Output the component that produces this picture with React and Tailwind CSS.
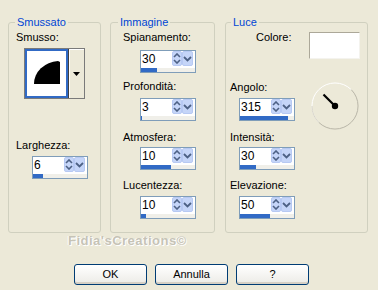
import React from 'react';

// spin box with up/down + dropdown buttons and a fill bar underneath
function Spin({ value, fill, className = '' }) {
  return (
    <div className={`flex h-[23px] w-[56px] flex-col border border-[#7F9DB9] bg-white ${className}`}>
      <div className="flex h-[16px] items-start">
        <span className="flex-1 pl-[1px] text-[12px] leading-[16px] text-black">{value}</span>
        <div className="mr-[2px] flex h-[15px]">
          <div className="flex w-[10px] items-center justify-center rounded-[2px] border border-[#B7C9F3] bg-[#C5D5F8]">
            <svg width="8" height="11" viewBox="0 0 8 11">
              <path d="M1 4 L4 1 L7 4" fill="none" stroke="#4D6185" strokeWidth="1.6" />
              <path d="M1 7 L4 10 L7 7" fill="none" stroke="#4D6185" strokeWidth="1.6" />
            </svg>
          </div>
          <div className="flex w-[11px] items-center justify-center rounded-[2px] border border-[#B7C9F3] bg-[#C5D5F8]">
            <svg width="9" height="6" viewBox="0 0 9 6">
              <path d="M1 1 L4.5 4.5 L8 1" fill="none" stroke="#4D6185" strokeWidth="1.8" />
            </svg>
          </div>
        </div>
      </div>
      <div className="mt-[1px] h-[4px] bg-[#F0EFE9]">
        <div className={`h-full bg-[#316AC5] ${fill}`} />
      </div>
    </div>
  );
}

function Group({ title, legendClass, className, children }) {
  return (
    <fieldset className={`h-[217px] rounded-[3px] border border-[#D0D0BF] ${className}`}>
      <legend className={`px-[2px] leading-[13px] text-[#0046D5] ${legendClass}`}>{title}</legend>
      {children}
    </fieldset>
  );
}

function Dial() {
  return (
    <svg width="48" height="48" viewBox="0 0 48 48">
      <path d="M7.7 40.3 A23 23 0 0 1 40.3 7.7" fill="none" stroke="#FFFFFF" strokeWidth="1" />
      <path d="M40.3 7.7 A23 23 0 0 1 7.7 40.3" fill="none" stroke="#B9B6A8" strokeWidth="1" />
      <path d="M7.7 40.3 A23 23 0 0 1 1 24" fill="none" stroke="#D6D3C6" strokeWidth="1" />
      <line x1="24" y1="24" x2="12.5" y2="12.5" stroke="#000" strokeWidth="2.2" />
      <circle cx="24" cy="24" r="3.2" fill="#000" />
    </svg>
  );
}

function XpButton({ children }) {
  return (
    <button className="h-[21px] w-[73px] rounded-[3px] border border-[#003C74] bg-gradient-to-b from-white to-[#ECEBE6] text-[11px] leading-[19px] text-black shadow-[inset_0_-2px_0_#D6D0C5]">
      {children}
    </button>
  );
}

export default function App() {
  const immagine = [
    { label: 'Spianamento:', value: '30', fill: 'w-[16px]', lm: 'mt-[2px]', sm: 'mt-[6px]' },
    { label: 'Profondità:', value: '3', fill: 'w-[1px]', lm: 'mt-[7px]', sm: 'mt-[5px]' },
    { label: 'Atmosfera:', value: '10', fill: 'w-[30px]', lm: 'mt-[10px]', sm: 'mt-[3px]' },
    { label: 'Lucentezza:', value: '10', fill: 'w-[5px]', lm: 'mt-[9px]', sm: 'mt-[4px]' },
  ];
  const luce = [
    { label: 'Angolo:', value: '315', fill: 'w-[48px]', lm: 'mt-0', sm: 'mt-[4px]' },
    { label: 'Intensità:', value: '30', fill: 'w-[16px]', lm: 'mt-[10px]', sm: 'mt-[3px]' },
    { label: 'Elevazione:', value: '50', fill: 'w-[30px]', lm: 'mt-[9px]', sm: 'mt-[4px]' },
  ];

  return (
    <div className="h-[290px] w-[378px] overflow-hidden bg-[#ECE9D8] pt-[16px] font-['Liberation_Sans',Arial,sans-serif] text-[11px] text-black">
      <div className="flex">
        {/* Smussato */}
        <Group title="Smussato" legendClass="ml-[6px]" className="ml-[8px] w-[93px]">
          <div className="ml-[7px] mt-[2px] leading-[13px]">Smusso:</div>
          <div className="ml-[15px] mt-[4px] flex h-[51px] w-[61px] border border-[#7A7A7A] bg-white">
            <div className="h-full w-[43px] border-2 border-[#316AC5] bg-white">
              <svg width="39" height="47" viewBox="0 0 39 47">
                <path d="M7 33 A26 23 0 0 1 31 10 L33 11 L33 33 Z" fill="#000" />
              </svg>
            </div>
            <div className="flex flex-1 items-center justify-center border-l border-[#404040] bg-[#ECE9D8] shadow-[inset_1px_1px_0_#fff]">
              <svg width="7" height="4" viewBox="0 0 7 4">
                <path d="M0 0 H7 L3.5 4 Z" fill="#000" />
              </svg>
            </div>
          </div>
          <div className="ml-[7px] mt-[40px] leading-[13px]">Larghezza:</div>
          <Spin value="6" fill="w-[10px]" className="ml-[23px] mt-[4px]" />
        </Group>

        {/* Immagine */}
        <Group title="Immagine" legendClass="ml-[7px]" className="ml-[9px] w-[105px]">
          {immagine.map((r) => (
            <div key={r.label}>
              <div className={`ml-[12px] leading-[13px] ${r.lm}`}>{r.label}</div>
              <Spin value={r.value} fill={r.fill} className={`ml-[29px] ${r.sm}`} />
            </div>
          ))}
        </Group>

        {/* Luce */}
        <Group title="Luce" legendClass="ml-[5px]" className="ml-[10px] w-[143px]">
          <div className="flex h-[30px] items-start">
            <div className="ml-[30px] mt-[2px] w-[53px] leading-[13px]">Colore:</div>
            <div className="mt-[3px] h-[27px] w-[51px] border border-[#ACA899] border-b-[#F4F3EE] border-r-[#F4F3EE] bg-white" />
          </div>
          <div className="mt-[22px] flex">
            <div className="w-[85px]">
              {luce.map((r) => (
                <div key={r.label}>
                  <div className={`ml-[4px] leading-[13px] ${r.lm}`}>{r.label}</div>
                  <Spin value={r.value} fill={r.fill} className={`ml-[13px] ${r.sm}`} />
                </div>
              ))}
            </div>
            <div className="mt-[1px]">
              <Dial />
            </div>
          </div>
        </Group>
      </div>

      <div className="ml-[68px] text-[13px] font-bold leading-[15px] tracking-[0.5px] text-[#C6C3B6] [text-shadow:1px_1px_0_#fff,-1px_0_0_#fff]">
        Fidia'sCreations©
      </div>

      <div className="ml-[74px] mt-[16px] flex gap-[8px]">
        <XpButton>OK</XpButton>
        <XpButton>Annulla</XpButton>
        <XpButton>?</XpButton>
      </div>
    </div>
  );
}
